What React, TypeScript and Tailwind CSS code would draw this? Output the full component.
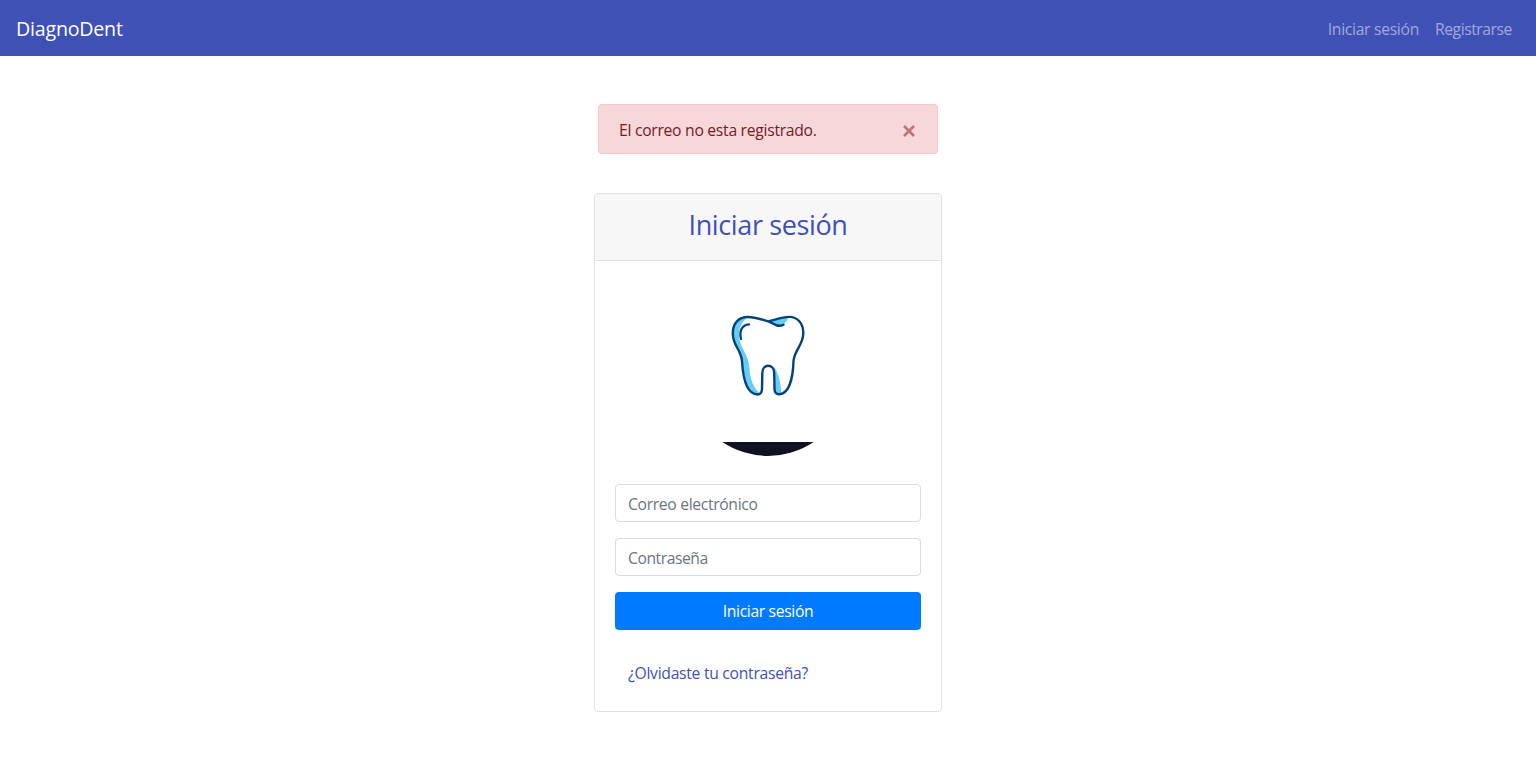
function ToothLogo() {
  return (
    <svg className="mx-auto block h-[175px] w-[176px]" viewBox="680 281 176 175" fill="none" aria-hidden="true">
      <path d="M722.300 442H813.700A82 82 0 0 1 722.300 442Z" fill="#111122" />
      <g transform="translate(720 305)" strokeLinecap="round" strokeLinejoin="round">
        <path
          d="M29 12C18 12 13 19 12.600 28C12.600 42 19 44 22 56C23 70 25 89 37 89.500L39.800 88.500C33 82 30 74 29.300 62C28.800 51 21 43 19.300 34C18 24 21 16 29 12Z"
          fill="#66cdf5"
        />
        <path d="M48.500 16.500C56 14.500 61 12 68 12.500C67.500 17 63 20.500 57 20.500Z" fill="#66cdf5" />
        <path d="M54.300 62V84C54.500 88 57 89.500 61.300 89C60.800 80 59.500 70 54.300 62Z" fill="#66cdf5" />
        <path
          d="M48.300 16.300C40 14 34 11.800 27 12C18 12.300 12.800 19 12.800 28.500C12.800 41 21 44 22 56C22.700 69 25 89 37.500 89.500C40.500 89.500 41.800 87.500 42 84L42.300 68C42.300 58.300 54.200 58.300 54.200 68L54.500 84C54.600 88 56.500 89.500 59.500 89.300C69.500 88.500 73 72 73.500 56C74.500 45 83.300 40 83.300 28C83.300 18 77.500 11.900 69 11.900C62 12 56 14.500 48.300 16.300C53 18.500 58 22.800 63.500 19.800"
          stroke="#04427a"
          strokeWidth="2.400"
        />
        <path d="M29 19.300C22 19.800 19 26 21 34" stroke="#04427a" strokeWidth="2.300" />
      </g>
    </svg>
  );
}

export default function App() {
  return (
    <div className="min-h-[762px] bg-white font-['Open_Sans','Noto_Sans',sans-serif] text-[15.7px] leading-6 text-[#212529]">
      <nav className="flex h-14 items-center justify-between bg-[#3f51b5] px-4">
        <a href="#" className="pt-px text-[19.600px] leading-[30px] tracking-[-0.2px] text-white">DiagnoDent</a>
        <div className="flex pt-px text-white/50">
          <a href="#" className="px-2 tracking-[-0.3px]">Iniciar sesión</a>
          <a href="#" className="px-2 tracking-[-0.44px]">Registrarse</a>
        </div>
      </nav>

      <main className="flex flex-col items-center pt-12">
        <div role="alert" className="flex h-[50px] w-[340px] items-center justify-between rounded border border-[#f5c6cb] bg-[#f8d7da] pt-px pr-[22px] pl-5 text-[#721c24]">
          <span className="tracking-[-0.28px]">El correo no esta registrado.</span>
          <button type="button" aria-label="Cerrar" className="pt-[2px] opacity-50">
            <svg className="block h-3 w-3" viewBox="0 0 12 12" fill="none" stroke="#721c24" strokeWidth="2.700">
              <path d="M1 1L11 11M11 1L1 11" />
            </svg>
          </button>
        </div>

        <section className="mt-[39px] h-[519px] w-[348px] rounded border border-[#e2e2e2] bg-white">
          <header className="h-[67px] rounded-t-[3px] border-b border-[#dfdfdf] bg-[#f7f7f7] pt-[14px] text-center">
            <h1 className="text-[27px] leading-[34px] tracking-[-0.370px] text-[#3f51b5]">Iniciar sesión</h1>
          </header>
          <form className="px-5 pt-5">
            <ToothLogo />
            <input type="email" placeholder="Correo electrónico" className="mt-7 block h-[38px] w-full rounded border border-[#d6dbe0] px-3 pt-px tracking-[-0.33px] placeholder:text-[#6c757d]" />
            <input type="password" placeholder="Contraseña" className="mt-4 block h-[38px] w-full rounded border border-[#d6dbe0] px-3 pt-px tracking-[-0.45px] placeholder:text-[#6c757d]" />
            <button type="button" className="mt-4 block h-[38px] w-full rounded bg-[#007bff] pb-px tracking-[-0.35px] text-white">Iniciar sesión</button>
            <a href="#" className="mt-[31px] ml-[13px] inline-block tracking-[-0.28px] text-[#3f51b5]">¿Olvidaste tu contraseña?</a>
          </form>
        </section>
      </main>
    </div>
  );
}
